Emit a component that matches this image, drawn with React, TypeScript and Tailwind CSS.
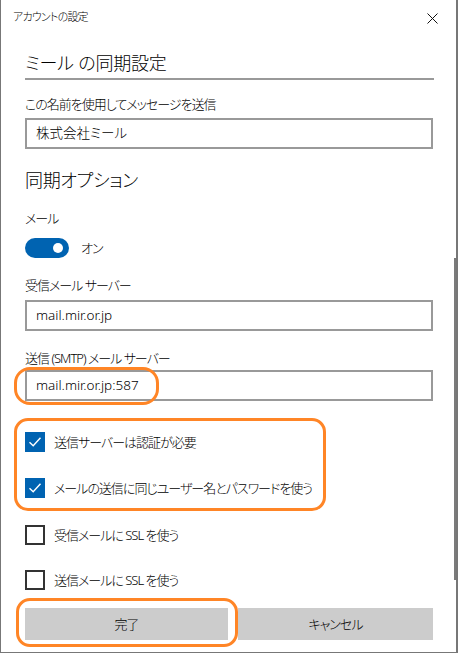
import React from 'react';

const FONT = "font-['Noto_Sans','Noto_Sans_CJK_JP',sans-serif] [font-feature-settings:'palt'] font-light";
const LABEL = 'text-[13px] leading-[20px] tracking-[-1px] text-black';

const TextBox: React.FC<{ value: string; className?: string }> = ({ value, className = '' }) => (
  <div className={`h-[31px] w-[408px] border-2 border-[#999999] flex items-center pl-[9px] text-[13.5px] text-black ${className}`}>
    {value}
  </div>
);

const CheckRow: React.FC<{ label: string; checked?: boolean; className?: string }> = ({ label, checked, className = '' }) => (
  <div className={`flex items-center gap-[9px] h-[20px] ${className}`}>
    {checked ? (
      <div className="w-[20px] h-[20px] bg-[#0063b1] flex items-center justify-center">
        <svg width="14" height="14" viewBox="0 0 14 14" fill="none">
          <path d="M1.5 7.2 L5.2 10.8 L12.5 2.8" stroke="white" strokeWidth="1.4" />
        </svg>
      </div>
    ) : (
      <div className="w-[20px] h-[20px] border-2 border-[#333333]" />
    )}
    <span className={LABEL}>{label}</span>
  </div>
);

export default function App() {
  return (
    <div className={`relative w-[458px] h-[653px] overflow-hidden bg-white border-l border-b border-r-2 border-[#777777] ${FONT}`}>
      {/* title bar */}
      <div className="h-[35px] flex items-center justify-between pl-[12px] pr-[18px]">
        <span className="text-[11px] tracking-[-0.8px] text-black">アカウントの設定</span>
        <svg width="11" height="11" viewBox="0 0 11 11" className="mt-[1px]">
          <path d="M0.5 0.5 L10.5 10.5 M10.5 0.5 L0.5 10.5" stroke="#111" strokeWidth="1" />
        </svg>
      </div>

      <div className="px-[24px] flex flex-col">
        <div className="mt-[14px] h-[31px] border-b-2 border-[#999999] text-[18px] leading-[28px] tracking-[-0.2px] text-black w-[409px]">
          ミール の同期設定
        </div>

        <div className={`mt-[14px] ${LABEL}`}>この名前を使用してメッセージを送信</div>
        <TextBox value="株式会社ミール" className="mt-[4px]" />

        <div className="mt-[17px] text-[18px] leading-[28px] tracking-[-0.3px] text-black">同期オプション</div>

        <div className={`mt-[14px] ${LABEL}`}>メール</div>
        <div className="mt-[10px] flex items-center gap-[12px]">
          <div className="w-[44px] h-[20px] rounded-full bg-[#0063b1] flex items-center justify-end pr-[6px]">
            <div className="w-[10px] h-[10px] rounded-full bg-white" />
          </div>
          <span className={LABEL}>オン</span>
        </div>

        <div className={`mt-[17px] ${LABEL}`}>受信メール サーバー</div>
        <TextBox value="mail.mir.or.jp" className="mt-[5px]" />

        <div className={`mt-[17px] ${LABEL}`}>送信 (SMTP) メール サーバー</div>
        <TextBox value="mail.mir.or.jp:587" className="mt-[2px]" />

        <CheckRow checked label="送信サーバーは認証が必要" className="mt-[31px]" />
        <CheckRow checked label="メールの送信に同じユーザー名とパスワードを使う" className="mt-[26px]" />
        <CheckRow label="受信メールに SSL を使う" className="mt-[27px]" />
        <CheckRow label="送信メールに SSL を使う" className="mt-[25px]" />

        <div className="mt-[18px] flex gap-[10px] w-[408px]">
          <button className={`h-[32px] w-[203px] bg-[#cccccc] ${LABEL}`}>完了</button>
          <button className={`h-[32px] flex-1 bg-[#cccccc] ${LABEL}`}>キャンセル</button>
        </div>
      </div>

      {/* scrollbar */}
      <div className="absolute left-[453px] top-[258px] w-[2px] h-[322px] bg-[#7b7b7b]" />

      {/* orange highlights */}
      <div className="absolute left-[13px] top-[367px] w-[145px] h-[38px] rounded-[16px] border-[3px] border-[#ff8526]" />
      <div className="absolute left-[13px] top-[418px] w-[312px] h-[93px] rounded-[14px] border-[3px] border-[#ff8526]" />
      <div className="absolute left-[15px] top-[598px] w-[222px] h-[49px] rounded-[14px] border-[3px] border-[#ff8526]" />
    </div>
  );
}
